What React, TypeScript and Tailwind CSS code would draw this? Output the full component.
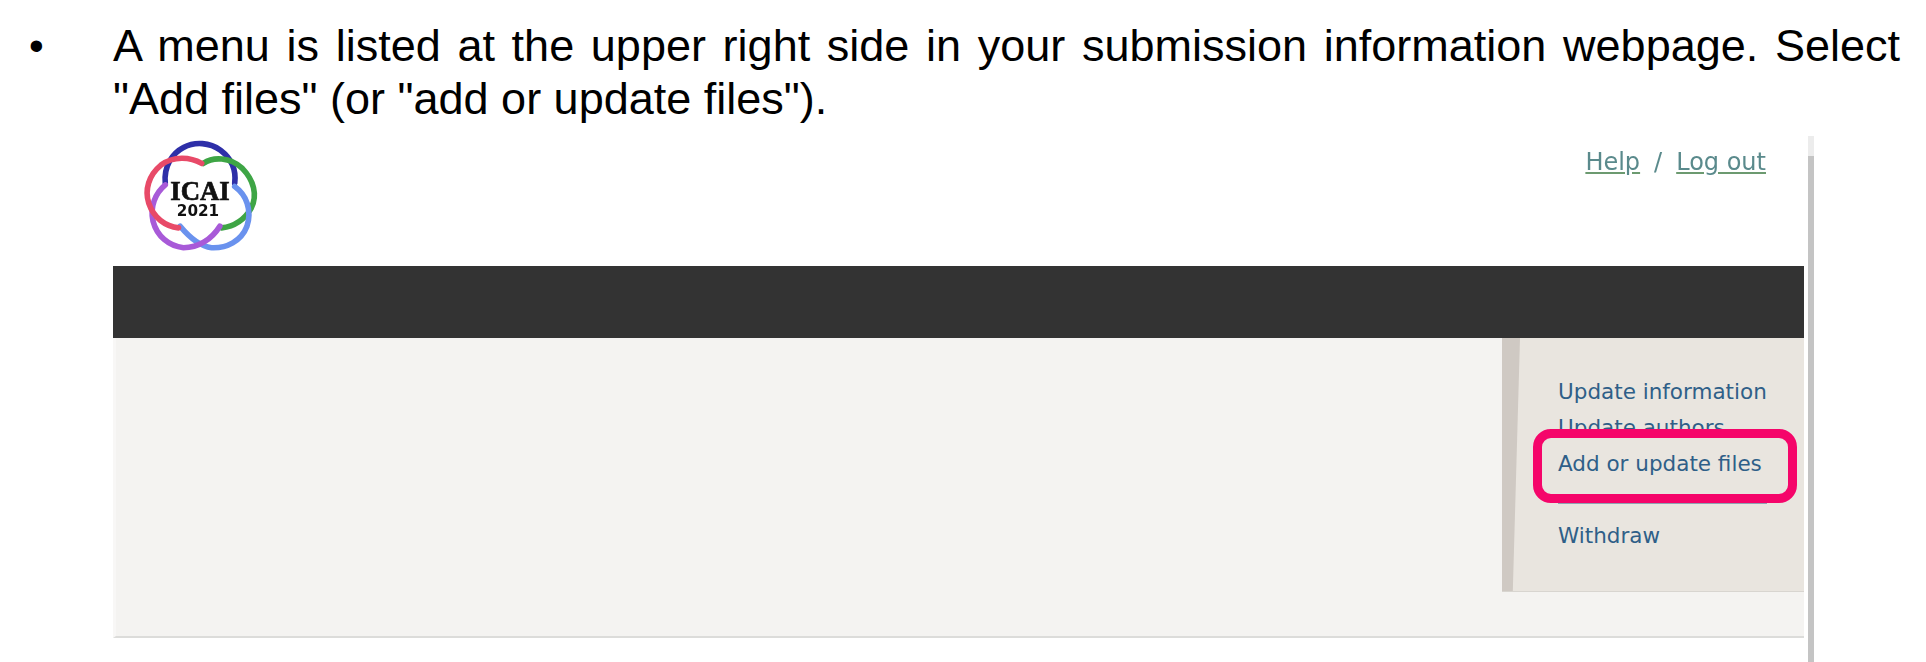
function Logo() {
  return (
    <svg width="140" height="124" viewBox="0 0 420 375" fill="none" strokeWidth="17" strokeLinecap="round">
      <path d="M105 155C100 105 125 65 160 47C195 28 240 32 272 55C305 80 320 115 315 155" stroke="#2e2fa8" />
      <path d="M220 95C250 75 300 75 338 110C372 145 385 190 365 230C345 265 315 285 275 290" stroke="#3ea545" />
      <path d="M315 165C350 190 368 235 352 285C335 330 290 352 245 350C205 345 175 315 150 285" stroke="#6a92ee" />
      <path d="M270 285C245 325 205 350 160 350C115 345 80 315 68 270C58 225 75 185 105 160" stroke="#a85ad8" />
      <path d="M215 95C180 75 130 72 92 100C55 130 42 175 55 215C70 260 105 285 145 290" stroke="#e84a68" />
      <text x="210" y="205" textAnchor="middle" fontFamily="'Liberation Serif', serif" fontWeight="700" fontSize="81" fill="#111111" stroke="#111111" strokeWidth="2">
        ICAI
      </text>
      <text x="204" y="255" textAnchor="middle" fontFamily="'DejaVu Sans', sans-serif" fontWeight="700" fontSize="46" fill="#111111" stroke="none">
        2021
      </text>
    </svg>
  )
}

export default function App() {
  return (
    <div className="relative w-[1926px] h-[662px] overflow-hidden bg-white font-['Liberation_Sans',Arial,sans-serif] text-black">
      <div className="flex pt-[19px]">
        <div className="w-[113px] pl-[29px] text-[42px] leading-[53px]">•</div>
        <p className="w-[1787px] text-[45px] leading-[53px] text-justify">
          A menu is listed at the upper right side in your submission information webpage. Select "Add files" (or "add or update files").
        </p>
      </div>

      <div className="flex ml-[113px] mt-[11px] blur-[0.5px]">
        <div className="w-[1691px] font-['DejaVu_Sans',Verdana,sans-serif]">
          <div className="flex justify-between h-[130px] pl-[29px] pr-[38px]">
            <div className="-ml-[12px] -mt-[4px]">
              <Logo />
            </div>
            <div className="pt-[14px] text-[24px] leading-[24px] text-[#5a8a8c]">
              <span className="underline decoration-[#6c9a70]">Help</span>
              <span className="mx-[14px]">/</span>
              <span className="underline decoration-[#6c9a70]">Log out</span>
            </div>
          </div>

          <div className="h-[72px] bg-[#333333]"></div>

          <div className="flex justify-end h-[300px] bg-[#f4f3f1] border-b-2 border-l-[3px] border-b-[#dcdcda] border-l-[#f8f7f6]">
            <div className="relative flex w-[302px] h-[254px] bg-[#e9e5df] border-b border-[#d8d5d0]">
              <div className="w-[18px] h-full bg-[#cfc9c3] [clip-path:polygon(0_0,100%_0,60%_100%,0_100%)]"></div>
              <div className="pl-[38px] pt-[36px] text-[21.5px] leading-[36px] text-[#2f5f88]">
                <div>Update information</div>
                <div>Update authors</div>
                <div className="relative z-10">Add or update files</div>
                <div className="h-[36px]"></div>
                <div>Withdraw</div>
              </div>
              <div className="absolute left-[31px] top-[91px] w-[264px] h-[74px] bg-[#e9e5df] border-[9px] border-[#f5056a] rounded-[18px]"></div>
              <div className="absolute left-[56px] top-[165px] w-[209px] h-px bg-[#8ea3b3]"></div>
            </div>
          </div>
        </div>
        <div className="ml-[4px] w-[6px]">
          <div className="h-[20px] bg-[#ececec]"></div>
          <div className="h-[510px] bg-[#c4c4c4]"></div>
        </div>
      </div>
    </div>
  )
}
